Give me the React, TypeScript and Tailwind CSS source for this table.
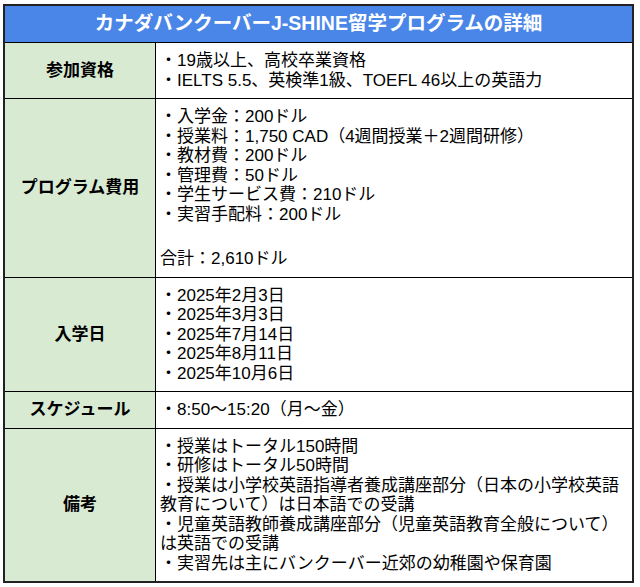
type Row = {
  label: string;
  lines: string[];
};

const rows: Row[] = [
  {
    label: "参加資格",
    lines: ["・19歳以上、高校卒業資格", "・IELTS 5.5、英検準1級、TOEFL 46以上の英語力"],
  },
  {
    label: "プログラム費用",
    lines: [
      "・入学金：200ドル",
      "・授業料：1,750 CAD（4週間授業＋2週間研修）",
      "・教材費：200ドル",
      "・管理費：50ドル",
      "・学生サービス費：210ドル",
      "・実習手配料：200ドル",
      "",
      "合計：2,610ドル",
    ],
  },
  {
    label: "入学日",
    lines: ["・2025年2月3日", "・2025年3月3日", "・2025年7月14日", "・2025年8月11日", "・2025年10月6日"],
  },
  {
    label: "スケジュール",
    lines: ["・8:50～15:20（月～金）"],
  },
  {
    label: "備考",
    lines: [
      "・授業はトータル150時間",
      "・研修はトータル50時間",
      "・授業は小学校英語指導者養成講座部分（日本の小学校英語教育について）は日本語での受講",
      "・児童英語教師養成講座部分（児童英語教育全般について）は英語での受講",
      "・実習先は主にバンクーバー近郊の幼稚園や保育園",
    ],
  },
];

export default function App() {
  return (
    <div className="min-h-[587px] w-[640px] bg-white pl-[3px] pt-[4px] font-['Liberation_Sans','Noto_Sans_CJK_JP',sans-serif] text-black">
      <div className="w-[631px] border-2 border-[#222]">
        <div className="flex h-[37px] items-center justify-center border-b border-black bg-[#4a86e8] text-[19.5px] font-bold text-white">
          カナダバンクーバーJ-SHINE留学プログラムの詳細
        </div>
        {rows.map((r, i) => (
          <div
            key={r.label}
            className={`grid grid-cols-[151px_1fr] ${i < rows.length - 1 ? "border-b border-black" : ""}`}
          >
            <div className="flex items-center justify-center border-r border-black bg-[#d9ead3] text-[17px] font-bold">
              {r.label}
            </div>
            <div className="px-1 py-2 text-[17px] leading-[19.5px]">
              {r.lines.map((l, j) =>
                l ? (
                  <div key={j}>{l}</div>
                ) : (
                  <div key={j} className="h-[25px]" />
                )
              )}
            </div>
          </div>
        ))}
      </div>
    </div>
  );
}
